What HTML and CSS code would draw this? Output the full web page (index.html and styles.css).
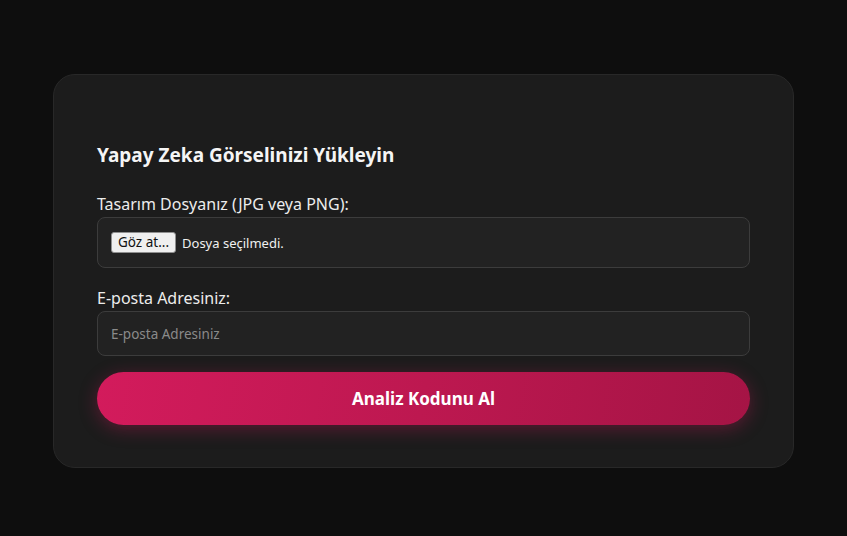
FILE: index.html
```html
<!DOCTYPE html>
<html lang="tr">
<head>
<meta charset="utf-8">
<title>Yükle</title>
<link rel="stylesheet" href="styles.css">
</head>
<body>
<main class="card">
  <h2 class="title">Yapay Zeka Görselinizi Yükleyin</h2>
  <form class="form">
    <label class="label" for="file">Tasarım Dosyanız (JPG veya PNG):</label>
    <div class="file-box">
      <span class="file-btn">Göz at...</span>
      <span class="file-name">Dosya seçilmedi.</span>
    </div>
    <label class="label label-gap" for="email">E-posta Adresiniz:</label>
    <input class="text-input" id="email" type="email" placeholder="E-posta Adresiniz">
    <button class="submit" type="button">Analiz Kodunu Al</button>
  </form>
</main>
</body>
</html>
```
FILE: styles.css
```css
* { box-sizing: border-box; }
html, body { margin: 0; padding: 0; }
body {
  background: #0e0e0e;
  font-family: "Noto Sans", "Open Sans", sans-serif;
  color: #f2f2f2;
  min-height: 536px;
  padding: 74px 53px 0;
}
.card {
  background: #1c1c1c;
  border: 1px solid #282828;
  border-radius: 22px;
  padding: 66px 43px 42px;
  height: 394px;
}
.title {
  margin: 0 0 25px;
  font-size: 19px;
  font-weight: 700;
  line-height: 28px;
  color: #f5f5f5;
}
.form { display: flex; flex-direction: column; }
.label {
  font-size: 16px;
  line-height: 21px;
  color: #ececec;
  margin-bottom: 2px;
}
.label-gap { margin-top: 20px; }
.file-box {
  height: 51px;
  background: #222222;
  border: 1px solid #3c3c3c;
  border-radius: 8px;
  display: flex;
  align-items: center;
  padding: 0 13px;
  gap: 6px;
}
.file-btn {
  font-family: "Noto Sans", sans-serif;
  font-size: 13.5px;
  color: #111;
  background: #efefef;
  border: 1px solid #8f8f8f;
  border-radius: 3px;
  padding: 1px 6px;
  line-height: 17px;
}
.file-name { font-size: 13px; color: #f0f0f0; }
.text-input {
  height: 45px;
  background: #222222;
  border: 1px solid #3c3c3c;
  border-radius: 8px;
  padding: 0 13px;
  font-family: inherit;
  font-size: 13.5px;
  color: #eee;
  outline: none;
}
.text-input::placeholder { color: #8a8a8a; }
.submit {
  margin-top: 16px;
  height: 53px;
  border: none;
  border-radius: 27px;
  background: linear-gradient(100deg, #d31b5c 0%, #bd1850 50%, #a51445 100%);
  color: #fff;
  font-family: inherit;
  font-size: 17px;
  font-weight: 700;
  box-shadow: 0 4px 18px rgba(210, 27, 92, 0.35);
  cursor: pointer;
}
```
